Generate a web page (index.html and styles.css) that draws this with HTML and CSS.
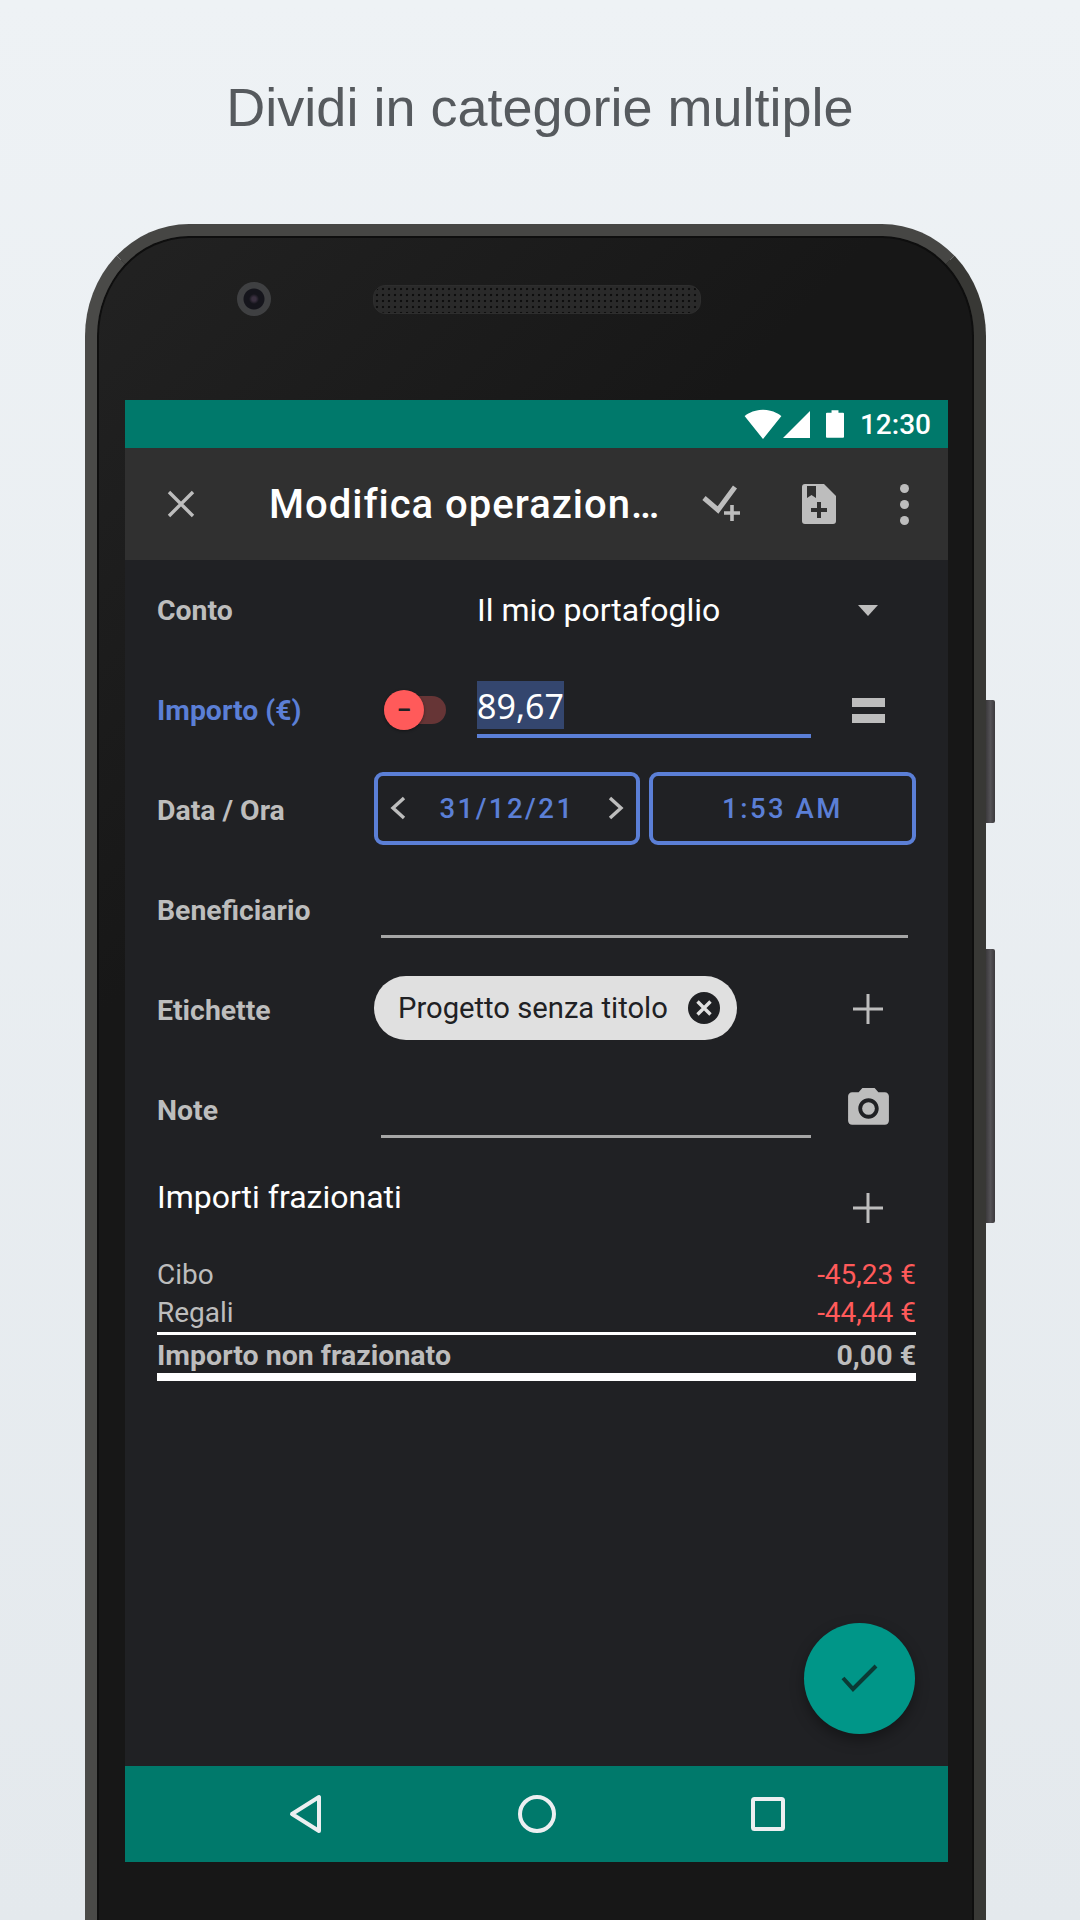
FILE: index.html

```html
<!DOCTYPE html>
<html lang="it">
<head>
  <meta charset="UTF-8">
  <title>Dividi in categorie multiple</title>
  <link rel="stylesheet" href="styles.css">
</head>
<body>
  <h1 class="headline">Dividi in categorie multiple</h1>

  <div class="device">
    <span class="side-btn power"></span>
    <span class="side-btn volume"></span>

    <div class="device-top">
      <span class="lens"></span>
      <span class="speaker"></span>
    </div>

    <div class="screen">
      <div class="statusbar">
        <svg class="st-wifi" viewBox="0 0 24 24"><path d="M12.01 21.49L23.64 7c-.45-.34-4.93-4-11.64-4C5.28 3 .81 6.66.36 7l11.63 14.49.01.01.01-.01z"/></svg>
        <svg class="st-signal" viewBox="0 0 20 20"><path d="M0 20h20V0z"/></svg>
        <svg class="st-battery" viewBox="0 0 13 20"><path d="M0 2.4C0 2 .3 1.8.7 1.8H4V0h5v1.8h3.300c.4 0 .7.2.7.6v17c0 .4-.3.6-.7.6H.7c-.4 0-.7-.2-.7-.6z"/></svg>
        <span class="clock">12:30</span>
      </div>

      <div class="toolbar">
        <span class="tb-close">
          <svg width="28" height="28" viewBox="0 0 28 28"><path d="M2 2l24 24M26 2L2 26" stroke="#bdbdbd" stroke-width="3.4" fill="none"/></svg>
        </span>
        <span class="tb-title">Modifica operazion…</span>
        <span class="tb-action wide">
          <svg width="40" height="38" viewBox="0 0 40 38"><path d="M2 13l14 12L33 2" stroke="#bdbdbd" stroke-width="5" fill="none"/><path d="M30 20v16M22 28h16" stroke="#bdbdbd" stroke-width="3.600" fill="none"/></svg>
        </span>
        <span class="tb-action doc">
          <svg width="34" height="40" viewBox="0 0 34 40"><path d="M3 0h19l12 12v25c0 2-1 3-3 3H3c-2 0-3-1-3-3V3c0-2 1-3 3-3z" fill="#bdbdbd"/><path d="M5 2h9v12l-4.500-3L5 14z" fill="#303030"/><path d="M17 18v16M9 26h16" stroke="#303030" stroke-width="4" fill="none"/></svg>
        </span>
        <span class="tb-action dots">
          <i></i><i></i><i></i>
        </span>
      </div>

      <div class="form">
        <div class="row">
          <span class="label">Conto</span>
          <div class="control">
            <span class="account">Il mio portafoglio</span>
            <span class="action"><span class="caret"></span></span>
          </div>
        </div>

        <div class="row">
          <span class="label active">Importo (€)</span>
          <div class="control">
            <span class="sign">
              <span class="sign-knob">–</span>
            </span>
            <div class="field amount"><span class="selected">89,67</span></div>
            <span class="action calc"><i></i><i></i></span>
          </div>
        </div>

        <div class="row">
          <span class="label">Data / Ora</span>
          <div class="control dates">
            <div class="date-btn">
              <svg width="16" height="24" viewBox="0 0 16 24"><path d="M14 2L3 12l11 10" stroke="#bdbdbd" stroke-width="3.4" fill="none"/></svg>
              <span>31/12/21</span>
              <svg width="16" height="24" viewBox="0 0 16 24"><path d="M2 2l11 10L2 22" stroke="#bdbdbd" stroke-width="3.4" fill="none"/></svg>
            </div>
            <div class="date-btn time"><span>1:53 AM</span></div>
          </div>
        </div>

        <div class="row">
          <span class="label">Beneficiario</span>
          <div class="control">
            <div class="field payee"></div>
          </div>
        </div>

        <div class="row">
          <span class="label">Etichette</span>
          <div class="control">
            <span class="chip">
              Progetto senza titolo
              <svg width="32" height="32" viewBox="0 0 32 32"><circle cx="16" cy="16" r="16" fill="#202124"/><path d="M9.500 9.500l13 13M22.500 9.500l-13 13" stroke="#e0e0e0" stroke-width="3.400"/></svg>
            </span>
            <span class="action chip-add">
              <svg width="30" height="30" viewBox="0 0 30 30"><path d="M15 0v30M0 15h30" stroke="#bdbdbd" stroke-width="3"/></svg>
            </span>
          </div>
        </div>

        <div class="row">
          <span class="label">Note</span>
          <div class="control">
            <div class="field note"></div>
            <span class="action">
              <svg class="camera" width="49" height="49" viewBox="0 0 24 24"><path fill="#bdbdbd" d="M9 2L7.170 4H4c-1.100 0-2 .9-2 2v12c0 1.100.9 2 2 2h16c1.100 0 2-.9 2-2V6c0-1.100-.9-2-2-2h-3.170L15 2H9zm3 15c-2.760 0-5-2.240-5-5s2.240-5 5-5 5 2.240 5 5-2.240 5-5 5z"/><circle fill="#bdbdbd" cx="12" cy="12" r="3.100"/></svg>
            </span>
          </div>
        </div>

        <div class="splits">
          <div class="splits-head">
            <span class="splits-title">Importi frazionati</span>
            <span class="action">
              <svg width="30" height="30" viewBox="0 0 30 30"><path d="M15 0v30M0 15h30" stroke="#bdbdbd" stroke-width="3"/></svg>
            </span>
          </div>
          <div class="split-row"><span>Cibo</span><span class="neg">-45,23 €</span></div>
          <div class="split-row"><span>Regali</span><span class="neg">-44,44 €</span></div>
          <div class="split-row total"><span>Importo non frazionato</span><span>0,00 €</span></div>
        </div>
      </div>

      <button class="fab">
        <svg width="38" height="30" viewBox="0 0 38 30"><path d="M2 14l10 11L35 2" stroke="#0b3a35" stroke-width="4" fill="none"/></svg>
      </button>

      <div class="navbar">
        <span class="nav-item"><svg width="36" height="42" viewBox="0 0 36 42"><path d="M31 4v34L4 21z" stroke="#eceff1" stroke-width="4" stroke-linejoin="round" fill="none"/></svg></span>
        <span class="nav-item"><svg width="38" height="38" viewBox="0 0 38 38"><circle cx="19" cy="19" r="17" stroke="#eceff1" stroke-width="4" fill="none"/></svg></span>
        <span class="nav-item"><svg width="34" height="34" viewBox="0 0 34 34"><rect x="2" y="2" width="30" height="30" rx="1.500" stroke="#eceff1" stroke-width="4" fill="none"/></svg></span>
      </div>
    </div>
  </div>
</body>
</html>
```

FILE: styles.css

```css
* { box-sizing: border-box; }
html, body { margin: 0; height: 1920px; overflow: hidden; }
body { font-family: Roboto, sans-serif; background: linear-gradient(#eef2f5, #e4e9ed); }

.headline { margin: 0; height: 224px; padding-top: 74px; text-align: center; font: 400 54px/66px "Liberation Sans", sans-serif; color: #565a5e; }

.device { position: relative; width: 901px; height: 1760px; margin-left: 85px; padding: 0 26px 0 28px; background: linear-gradient(135deg, #222 0, #171717 30%); border: 12px solid #3e3e3c; border-left-color: #4a4a48; border-right-color: #383835; border-top-color: #464644; border-radius: 104px 104px 0 0 / 112px 112px 0 0; box-shadow: inset 0 0 0 2px #0e0e0e; }
.side-btn { position: absolute; left: 889px; width: 9px; background: linear-gradient(90deg, #3c3a3d, #545256 50%, #3c3a3d); border-radius: 0 2px 2px 0; }
.side-btn.power { top: 464px; height: 123px; }
.side-btn.volume { top: 713px; height: 274px; }

.device-top { display: flex; align-items: center; height: 164px; padding: 0 0 38px 112px; gap: 102px; }
.lens { width: 34px; height: 34px; border-radius: 50%; background: radial-gradient(circle at 50% 50%, #3a3040 0 2px, #15151c 5px, #15151c 10px, #3f4042 11px); }
.speaker { width: 328px; height: 29px; border-radius: 12px; background: #2a2a2a radial-gradient(#0e0e0e 1.100px, transparent 1.600px) 0 0 / 6px 6px; border: 1px solid #2e2e2e; }

.screen { position: relative; display: flex; flex-direction: column; width: 823px; height: 1462px; background: #202124; }

.statusbar { display: flex; align-items: center; justify-content: flex-end; height: 48px; padding-right: 17px; background: #00796b; }
.statusbar svg { fill: #fff; display: block; }
.st-wifi { width: 38px; height: 38px; margin-right: 1px; }
.st-signal { width: 27px; height: 27px; margin-right: 16px; }
.st-battery { width: 18px; height: 28px; margin-right: 16px; }
.clock { font-size: 28px; font-weight: 500; color: #fff; }

.toolbar { display: flex; align-items: center; height: 112px; background: #303030; }
.tb-close { display: flex; justify-content: center; width: 48px; margin-left: 32px; }
.tb-title { width: 405px; margin-left: 64px; font-size: 40px; font-weight: 500; letter-spacing: 1px; color: #fff; white-space: nowrap; }
.tb-action { display: flex; align-items: center; justify-content: center; }
.tb-action.wide { width: 96px; }
.tb-action.doc { width: 98px; }
.tb-action.dots { flex-direction: column; gap: 7px; width: 72px; }
.tb-action.dots i { width: 9px; height: 9px; border-radius: 50%; background: #bdbdbd; }

.form { flex: 1; padding: 0 32px; }
.row { display: flex; align-items: center; height: 100px; }
.label { width: 217px; font-size: 28.400px; font-weight: 700; color: #bdbdbd; }
.label.active { color: #5b7fd6; }
.control { display: flex; align-items: center; flex: 1; height: 100%; }
.action { display: flex; align-items: center; justify-content: center; width: 96px; margin-left: auto; }

.account { margin-left: 103px; font-size: 32px; color: #fff; }
.caret { width: 0; height: 0; border-left: 10px solid transparent; border-right: 10px solid transparent; border-top: 11px solid #bdbdbd; }

.sign { position: relative; width: 62px; height: 28px; margin-left: 10px; border-radius: 14px; background: #663536; }
.sign-knob { position: absolute; left: 0; top: -6px; display: flex; align-items: center; justify-content: center; width: 40px; height: 40px; border-radius: 50%; background: #ff5a5a; color: #202124; font-size: 22px; font-weight: 700; box-shadow: 0 1px 3px rgba(0, 0, 0, .4); }

.field { height: 55px; margin-left: 7px; border-bottom: 3px solid #a6a6a6; }
.field.amount { width: 334px; height: 56px; margin-left: 31px; border-bottom: 4px solid #5b7fd6; }
.field.payee { width: 527px; }
.field.note { width: 430px; }
.selected { display: inline-block; height: 48px; margin-top: -1px; font: 400 34px/51px "Noto Sans", sans-serif; color: #fff; background: #34466e; vertical-align: top; }
.calc { flex-direction: column; gap: 7px; }
.calc i { width: 33px; height: 9px; background: #bdbdbd; }

.dates { gap: 9px; }
.date-btn { display: flex; align-items: center; justify-content: space-between; width: 266px; height: 73px; margin-bottom: 4px; padding: 0 12px; border: 4px solid #5b7fd6; border-radius: 9px; font-size: 27.500px; font-weight: 500; letter-spacing: 2.500px; color: #5b7fd6; }
.date-btn.time { justify-content: center; width: 267px; }

.chip { display: flex; align-items: center; gap: 20px; height: 64px; margin-bottom: 4px; padding: 0 17px 0 24px; border-radius: 32px; background: #e0e0e0; font-size: 29.200px; color: #202124; white-space: nowrap; }
.chip-add { margin-bottom: 2px; }
.camera { margin-top: -4px; }

.splits-head { display: flex; height: 96px; }
.splits-title { margin-top: 17px; font-size: 32px; line-height: 40px; color: #fff; }
.split-row { display: flex; justify-content: space-between; height: 38px; font-size: 28px; line-height: 38px; color: #bdbdbd; }
.split-row .neg { color: #ff5a5a; }
.split-row.total { height: 49px; padding-top: 3px; border-top: 3px solid #fff; border-bottom: 8px solid #fff; font-size: 28.500px; font-weight: 700; line-height: 35px; }

.fab { position: absolute; right: 33px; bottom: 128px; display: flex; align-items: center; justify-content: center; width: 111px; height: 111px; padding: 0; border: none; border-radius: 50%; background: #009688; box-shadow: 0 6px 14px rgba(0, 0, 0, .35); }

.navbar { display: flex; justify-content: center; align-items: center; height: 96px; background: #00796b; }
.nav-item { display: flex; justify-content: center; width: 231px; }
```
